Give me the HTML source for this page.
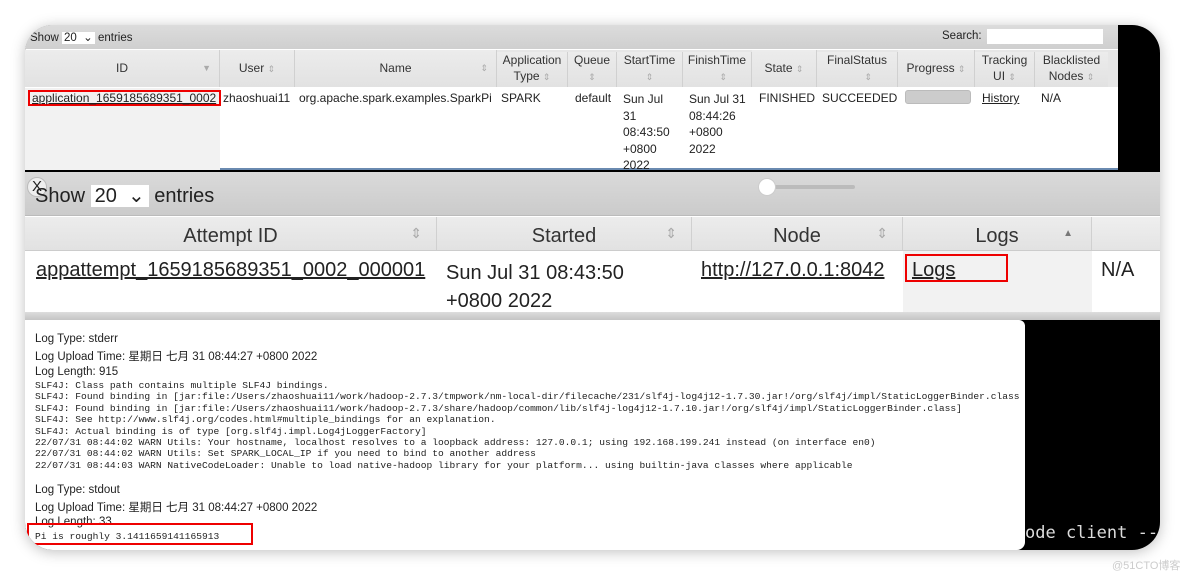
<!DOCTYPE html>
<html><head><meta charset="utf-8"><style>
*{margin:0;padding:0;box-sizing:border-box}
body{width:1184px;height:576px;background:#fff;position:relative;overflow:hidden;font-family:"Liberation Sans","Noto Sans CJK SC",sans-serif;color:#222}
.a{position:absolute}
.frame{left:25px;top:25px;width:1135px;height:525px;border-radius:28px;background:#000;overflow:hidden;box-shadow:0 2px 14px rgba(0,0,0,.25)}
.t{font-size:12px;white-space:nowrap}
.hd{background:linear-gradient(#ececec,#e2e2e2);border-right:1px solid #d0d0d0;text-align:center;font-size:12px;color:#333}
.m{font-family:"Liberation Mono",monospace;font-size:9.6px;white-space:pre;color:#222}
u{text-decoration:underline}
.red{border:2px solid #e00}
.ar{color:#aaa;font-size:9px}
</style></head><body>
<div class="a frame">
 <div class="a" style="left:0;top:0;width:1093px;height:145px;background:#fff;border-bottom:2px solid #6a8ab0"></div>
 <div class="a" style="left:0;top:0;width:1093px;height:24px;background:linear-gradient(#dcdcdc,#cfcfcf)"></div>
 <div class="a t" style="left:5px;top:5px;font-size:11.5px">Show <span style="background:#fff;padding:0 2px">20 &nbsp;⌄</span> entries</div>
 <div class="a t" style="left:917px;top:5px;font-size:11.5px">Search:</div>
 <div class="a" style="left:962px;top:4px;width:116px;height:15px;background:#fff"></div>
 <div class="a" style="left:0;top:25px;width:1093px;height:37px;background:#e6e6e6"></div>
 <div class="a" style="left:0;top:63px;width:195px;height:82px;background:#f2f2f2"></div>
 <div class="a hd" style="left:0;top:25px;width:195px;height:37px;line-height:37px">ID <span class="a ar" style="right:8px;top:0">▼</span></div>
 <div class="a hd" style="left:195px;top:25px;width:75px;height:37px;line-height:37px">User <span class="ar">⇕</span></div>
 <div class="a hd" style="left:270px;top:25px;width:202px;height:37px;line-height:37px">Name <span class="a ar" style="right:8px">⇕</span></div>
 <div class="a hd" style="left:472px;top:27px;width:71px;height:35px;line-height:16px">Application<br>Type <span class="ar">⇕</span></div>
 <div class="a hd" style="left:543px;top:27px;width:49px;height:35px;line-height:16px">Queue<br><span class="ar">⇕</span></div>
 <div class="a hd" style="left:592px;top:27px;width:66px;height:35px;line-height:16px">StartTime<br><span class="ar">⇕</span></div>
 <div class="a hd" style="left:658px;top:27px;width:69px;height:35px;line-height:16px">FinishTime<br><span class="ar">&nbsp;&nbsp;&nbsp;&nbsp;&nbsp;⇕</span></div>
 <div class="a hd" style="left:727px;top:25px;width:65px;height:37px;line-height:37px">State <span class="ar">⇕</span></div>
 <div class="a hd" style="left:792px;top:27px;width:81px;height:35px;line-height:16px">FinalStatus<br><span class="ar">&nbsp;&nbsp;&nbsp;&nbsp;&nbsp;&nbsp;&nbsp;&nbsp;&nbsp;⇕</span></div>
 <div class="a hd" style="left:873px;top:25px;width:77px;height:37px;line-height:37px">Progress <span class="ar">⇕</span></div>
 <div class="a hd" style="left:950px;top:27px;width:60px;height:35px;line-height:16px">Tracking<br>UI <span class="ar">⇕</span></div>
 <div class="a hd" style="left:1010px;top:27px;width:73px;height:35px;line-height:16px;border:0">Blacklisted<br>Nodes <span class="ar">⇕</span></div>
 <div class="a red" style="left:3px;top:65px;width:193px;height:16px"></div>
 <div class="a t" style="left:7px;top:66px"><u>application_1659185689351_0002</u></div>
 <div class="a t" style="left:198px;top:66px">zhaoshuai11</div>
 <div class="a t" style="left:274px;top:66px">org.apache.spark.examples.SparkPi</div>
 <div class="a t" style="left:476px;top:66px">SPARK</div>
 <div class="a t" style="left:550px;top:66px">default</div>
 <div class="a t" style="left:598px;top:66px;line-height:16.5px">Sun Jul<br>31<br>08:43:50<br>+0800<br>2022</div>
 <div class="a t" style="left:664px;top:66px;line-height:16.5px">Sun Jul 31<br>08:44:26<br>+0800<br>2022</div>
 <div class="a t" style="left:734px;top:66px">FINISHED</div>
 <div class="a t" style="left:797px;top:66px">SUCCEEDED</div>
 <div class="a" style="left:880px;top:65px;width:66px;height:14px;background:#ccc;border:1px solid #bbb;border-radius:3px"></div>
 <div class="a t" style="left:957px;top:66px"><u>History</u></div>
 <div class="a t" style="left:1016px;top:66px">N/A</div>
 <div class="a" style="left:0;top:147px;width:1135px;height:148px;background:#fff"></div>
 <div class="a" style="left:0;top:147px;width:1135px;height:44px;background:linear-gradient(#dadada,#cbcbcb);border-bottom:1px solid #bbb"></div>
 <div class="a" style="left:2px;top:152px;width:20px;height:20px;border-radius:50%;background:#eee;border:1px solid #bbb;font-size:15px;line-height:18px;text-align:center">X</div>
 <div class="a t" style="left:10px;top:158px;font-size:20px">Show <span style="background:#fff;padding:0 4px">20 &nbsp;⌄</span> entries</div>
 <div class="a" style="left:740px;top:160px;width:90px;height:4px;background:#bbb;border-radius:2px"></div>
 <div class="a" style="left:733px;top:153px;width:18px;height:18px;border-radius:50%;background:#fff;border:1px solid #ccc"></div>
 <div class="a" style="left:0;top:192px;width:1135px;height:33px;background:linear-gradient(#efefef,#e4e4e4)"></div>
 <div class="a" style="left:878px;top:226px;width:189px;height:62px;background:#f2f2f2"></div>
 <div class="a hd" style="left:0;top:192px;width:412px;height:33px;line-height:39px;font-size:20px">Attempt ID<span class="a ar" style="right:14px;top:-3px;font-size:14px">⇕</span></div>
 <div class="a hd" style="left:412px;top:192px;width:255px;height:33px;line-height:39px;font-size:20px">Started<span class="a ar" style="right:14px;top:-3px;font-size:14px">⇕</span></div>
 <div class="a hd" style="left:667px;top:192px;width:211px;height:33px;line-height:39px;font-size:20px">Node<span class="a ar" style="right:14px;top:-3px;font-size:14px">⇕</span></div>
 <div class="a hd" style="left:878px;top:192px;width:189px;height:33px;line-height:39px;font-size:20px">Logs<span class="a" style="right:18px;top:-3px;font-size:10px;color:#777">▲</span></div>
 <div class="a" style="left:0;top:225px;width:1135px;height:1px;background:#ccc"></div>
 <div class="a t" style="left:11px;top:234px;font-size:20px"><u>appattempt_1659185689351_0002_000001</u></div>
 <div class="a t" style="left:421px;top:234px;font-size:20px;line-height:28px">Sun Jul 31 08:43:50<br>+0800 2022</div>
 <div class="a t" style="left:676px;top:234px;font-size:20px"><u>http://127.0.0.1:8042</u></div>
 <div class="a red" style="left:880px;top:229px;width:103px;height:28px"></div>
 <div class="a t" style="left:887px;top:234px;font-size:20px"><u>Logs</u></div>
 <div class="a t" style="left:1076px;top:234px;font-size:20px">N/A</div>
 <div class="a" style="left:0;top:287px;width:1135px;height:8px;background:linear-gradient(#ddd,#c4c4c4)"></div>
 <div class="a" style="left:0;top:295px;width:1000px;height:230px;background:#fff;border-radius:0 6px 8px 0"></div>
 <div class="a t" style="left:10px;top:308px;font-size:11.5px">Log Type: stderr</div>
 <div class="a t" style="left:10px;top:323px;font-size:11.5px">Log Upload Time: 星期日 七月 31 08:44:27 +0800 2022</div>
 <div class="a t" style="left:10px;top:341px;font-size:11.5px">Log Length: 915</div>
 <div class="a m" style="left:10px;top:355px;line-height:11.4px">SLF4J: Class path contains multiple SLF4J bindings.
SLF4J: Found binding in [jar:file:/Users/zhaoshuai11/work/hadoop-2.7.3/tmpwork/nm-local-dir/filecache/231/slf4j-log4j12-1.7.30.jar!/org/slf4j/impl/StaticLoggerBinder.class
SLF4J: Found binding in [jar:file:/Users/zhaoshuai11/work/hadoop-2.7.3/share/hadoop/common/lib/slf4j-log4j12-1.7.10.jar!/org/slf4j/impl/StaticLoggerBinder.class]
SLF4J: See http://www.slf4j.org/codes.html#multiple_bindings for an explanation.
SLF4J: Actual binding is of type [org.slf4j.impl.Log4jLoggerFactory]
22/07/31 08:44:02 WARN Utils: Your hostname, localhost resolves to a loopback address: 127.0.0.1; using 192.168.199.241 instead (on interface en0)
22/07/31 08:44:02 WARN Utils: Set SPARK_LOCAL_IP if you need to bind to another address
22/07/31 08:44:03 WARN NativeCodeLoader: Unable to load native-hadoop library for your platform... using builtin-java classes where applicable</div>
 <div class="a t" style="left:10px;top:459px;font-size:11.5px">Log Type: stdout</div>
 <div class="a t" style="left:10px;top:474px;font-size:11.5px">Log Upload Time: 星期日 七月 31 08:44:27 +0800 2022</div>
 <div class="a t" style="left:10px;top:491px;font-size:11.5px">Log Length: 33</div>
 <div class="a red" style="left:2px;top:498px;width:226px;height:22px"></div>
 <div class="a m" style="left:10px;top:506px">Pi is roughly 3.1411659141165913</div>
 <div class="a" style="left:1000px;top:498px;font-family:'DejaVu Sans Mono',monospace;font-size:17px;color:#ddd;white-space:nowrap">ode client --e</div>
</div>
<div class="a" style="left:1112px;top:557px;font-size:11px;color:#ccc">@51CTO博客</div>
</body></html>
